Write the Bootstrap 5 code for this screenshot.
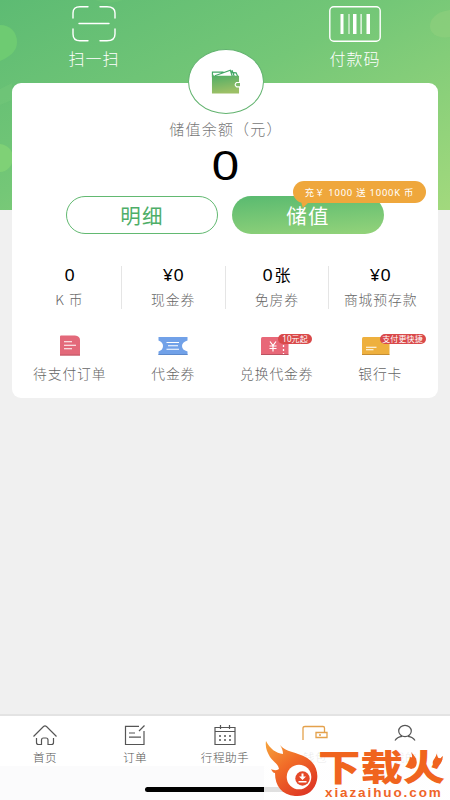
<!DOCTYPE html>
<html lang="zh-CN">
<head>
<meta charset="utf-8">
<meta name="viewport" content="width=device-width, initial-scale=1">
<title>钱包</title>
<link href="https://cdn.jsdelivr.net/npm/bootstrap@5.3.0/dist/css/bootstrap.min.css" rel="stylesheet">
<style>
html,body{height:100%}
body{font-family:"Liberation Sans","Noto Sans CJK SC",sans-serif;background:#f0f0f0;color:#666;font-weight:300;overflow:hidden}
.screen{width:450px;height:800px;overflow:hidden}
svg{display:block;overflow:visible}
.cjk{font-family:"Noto Sans CJK SC",sans-serif}
.hero{height:210px;background:linear-gradient(154deg,#5dbb73 0%,#74c777 45%,#a2d97d 100%)}
.blobs{left:0;top:0}
.quick{height:83px;padding:6px 35px 0 34px}
.quick-item{width:120px;font-size:16px;letter-spacing:1px;line-height:20px}
.quick-item svg{margin-bottom:6px}
.wallet-card{margin:-127px 12px 0;height:315px;border-radius:9px;padding:0 6px}
.purse{width:76px;height:65px;left:50%;top:-34px;margin-left:-37.5px;border:1px solid #62b36f;border-radius:50%;background:#fff}
.caption{padding-top:36px;font-size:15px;line-height:20px;letter-spacing:1.2px;color:#777}
.caption span{margin-left:2px}
.amount{font-family:"Noto Sans",sans-serif;font-weight:400;font-size:40px;line-height:44px;color:#000;height:57px;padding-top:4px}
.amount span{display:inline-block;transform:scale(1.24,1)}
.pill{width:152px;height:38px;border-radius:19px;font-size:20.5px;letter-spacing:1.2px;line-height:34px;padding:0;font-weight:400}
.pill-line{border:1px solid #62b971;color:#4eae68}
.pill-line:hover{border-color:#62b971;color:#4eae68}
.pill-fill,.pill-fill:hover{border:0;background:linear-gradient(176deg,#59ba70,#94d37a);color:#fff;line-height:36px}
.tip{left:61px;top:-15px;width:133px;height:22px;border-radius:11px;background:#efa73c;color:#fff;font-family:"Noto Sans","Noto Sans CJK SC",sans-serif;font-weight:400;font-size:9.4px;line-height:23px;letter-spacing:.8px;white-space:nowrap}
.tip-tail{left:8px;top:20px;width:9px;height:7px;background:#efa73c;clip-path:polygon(0 0,100% 0,20% 100%)}
.stats{margin-top:32px;height:41px}
.stat+.stat{border-left:1px solid #e5e5e5}
.num{font-family:"Noto Sans","Noto Sans CJK SC",sans-serif;font-weight:400;font-size:16px;line-height:19px;color:#000;letter-spacing:.3px}
.num b{font-weight:400;display:inline-block;transform:scaleX(1.12)}
.num i{font-style:normal;margin-left:2px}
.lab{font-size:13.8px;line-height:20px;letter-spacing:.9px;white-space:nowrap}
.stat .lab{margin-top:4px}
.tools{margin-top:28px}
.tool svg{margin:0 auto 7px}
.tag{top:-1px;height:10px;border-radius:5px;background:#d9494a;color:#fff;font-family:"Noto Sans","Noto Sans CJK SC",sans-serif;font-weight:400;font-size:8px;line-height:10px;letter-spacing:.1px;white-space:nowrap;text-align:center}
.tag-a{left:53px;width:34px}
.tag-b{left:51px;width:46px}
.tabs{height:86px;background:#fbfbfc;border-top:2px solid #e3e3e3}
.tabrow{height:50px;background:#fff}
.tab{width:90px;font-size:11.6px;letter-spacing:.5px;line-height:15px;padding-top:8px;color:#555}
.tab svg{margin:0 auto 4px}
.home-bar{width:160px;height:5px;border-radius:3px;background:#000;margin:21px 0 0 145px}
.brand{left:264px;top:738px;width:186px;height:62px;background:linear-gradient(transparent 4px,rgba(255,255,255,.88) 5px)}
.brand-flame{left:0;top:0}
.brand-name{left:54px;top:6px;font-size:40px;line-height:44px;font-weight:900;color:#f0641e;white-space:nowrap;transform:scale(1.06,.9);transform-origin:left 20px}
.brand-url{left:61px;top:49px;font-family:"Liberation Sans",sans-serif;font-weight:700;font-size:13.5px;line-height:12px;letter-spacing:1.9px;color:#ef6528}
</style>
<script src="https://cdn.jsdelivr.net/npm/bootstrap@5.3.0/dist/js/bootstrap.bundle.min.js"></script>
</head>
<body>
<main class="screen position-relative d-flex flex-column cjk">
  <header class="hero position-relative overflow-hidden flex-shrink-0">
    <svg class="blobs position-absolute" width="450" height="210">
      <path d="M0 25C10 25 17 32 17 42C17 52 9 57 0 61Z" fill="#6ecb72"/>
      <circle cx="-1" cy="158" r="14" fill="#7fd176"/>
      <path d="M450 10C436 12 430 19 430 26C430 34 438 39 450 37Z" fill="#8dcf7c" opacity=".7"/>
      <path d="M95 0Q108 6 123 0Z" fill="#6dc576" opacity=".6"/>
      <path d="M0 89L12 83V100L0 105Z" fill="#74c879" opacity=".5"/>
    </svg>
    <div class="quick position-relative d-flex justify-content-between text-white text-center">
      <div class="quick-item d-flex flex-column align-items-center">
        <svg width="44" height="36" fill="none" stroke="#fff" stroke-width="1.4" stroke-linecap="round"><path d="M1 12V7Q1 .7 8 .7H16M28 .7H35Q43 .7 43 7V12M1 23V28Q1 34.8 8 34.8H16M28 34.8H35Q43 34.8 43 28V23M7 17.5H37"/></svg>
        <span>扫一扫</span>
      </div>
      <div class="quick-item d-flex flex-column align-items-center">
        <svg width="52" height="36"><rect x=".8" y=".8" width="50.4" height="34.4" rx="4" fill="none" stroke="#fff" stroke-width="1.4"/><path d="M11.5 8h3v20h-3zM19.5 8h1v20h-1zM24 8h3.5v20H24zM31.5 8h1.2v20h-1.2zM37.5 8h3.5v20h-3.5z" fill="#fff"/></svg>
        <span>付款码</span>
      </div>
    </div>
  </header>

  <section class="wallet-card position-relative bg-white flex-shrink-0">
    <div class="purse position-absolute d-flex align-items-center justify-content-center">
      <svg width="29" height="26" viewBox="0 0 30 26">
        <defs><linearGradient id="leather" x1="0" y1="0" x2=".2" y2="1"><stop offset="0" stop-color="#43aa66"/><stop offset="1" stop-color="#9cc066"/></linearGradient></defs>
        <path d="M20 3L26 3.5L28 8M16 4L22 1.5L24 7" fill="none" stroke="#42a767" stroke-width="1.2"/>
        <path d="M1.5 8V2.800H13M4 6.500L20 .8L22 7" fill="#fff" stroke="#42a767" stroke-width="1.2"/>
        <path d="M1 3L3 6.500H29V25H1Z" fill="url(#leather)"/>
        <path d="M30 13.500H26.500Q23.500 15.700 26.500 18H30" fill="#7dba69" stroke="#fff" stroke-width="1.2"/>
      </svg>
    </div>
    <div class="caption text-center"><span>储值余额（元）</span></div>
    <div class="amount text-center"><span>0</span></div>
    <div class="d-flex justify-content-center" style="gap:14px">
      <button class="btn pill pill-line">明细</button>
      <div class="position-relative">
        <button class="btn pill pill-fill">储值</button>
        <div class="tip position-absolute text-center">充￥ 1000 送 1000K 币<div class="tip-tail position-absolute"></div></div>
      </div>
    </div>
    <div class="stats row g-0 text-center">
      <div class="col stat"><div class="num"><b>0</b></div><div class="lab">K 币</div></div>
      <div class="col stat"><div class="num"><b>¥0</b></div><div class="lab">现金券</div></div>
      <div class="col stat"><div class="num"><b>0</b><i>张</i></div><div class="lab">免房券</div></div>
      <div class="col stat"><div class="num"><b>¥0</b></div><div class="lab">商城预存款</div></div>
    </div>
    <div class="tools row g-0 text-center">
      <div class="col tool position-relative">
        <svg width="20" height="21"><path d="M0 1.5Q0 .5 1 .5H15Q20 1 20 5V20.500H0Z" fill="#e3697a"/><path d="M0 19.500h20v1H0z" fill="#be5867"/><path d="M4 6.800h8M4 10.300h12M4 13.800h8" stroke="#fff" stroke-width="1.1"/></svg>
        <div class="lab">待支付订单</div>
      </div>
      <div class="col tool position-relative">
        <svg width="30" height="21"><path d="M.5 2H29.500V5.500Q24 7 24 11T29.500 16.500V20H.5V16.500Q5 15 5 11T.5 5.500Z" fill="#71a1e8"/><path d="M.5 19h29v1H.5z" fill="#5c89cb"/><path d="M8.500 7.500h12.500M10 10.800h10M8.500 14.300h12.500" stroke="#fff" stroke-width="1.1"/></svg>
        <div class="lab">代金券</div>
      </div>
      <div class="col tool position-relative">
        <svg width="32" height="21"><rect x="0" y="2" width="27.5" height="18" rx="1.5" fill="#e86878"/><path d="M0 19h27.500v1H0z" fill="#bb5361"/><path d="M9 6.500l3 4 3-4M12 10.500v6M8.500 11h7M8.500 13.500h7" fill="none" stroke="#fff" stroke-width="1.2"/><path d="M22.500 10v9" stroke="#fff" stroke-width="1.3" stroke-dasharray="2 2"/></svg>
        <div class="tag tag-a position-absolute">10元起</div>
        <div class="lab">兑换代金券</div>
      </div>
      <div class="col tool position-relative">
        <svg width="36" height="21"><rect x="0" y="2" width="27.5" height="18" rx="1.5" fill="#eeb03e"/><path d="M0 19h27.500v1H0z" fill="#c58d32"/><path d="M4 12.300h10.500M4 14.800h7.500" stroke="#fff" stroke-width="1.1"/></svg>
        <div class="tag tag-b position-absolute">支付更快捷</div>
        <div class="lab">银行卡</div>
      </div>
    </div>
  </section>

  <footer class="tabs mt-auto flex-shrink-0">
    <nav class="tabrow d-flex text-center">
      <div class="tab"><svg width="24" height="22" fill="none" stroke="#555" stroke-width="1.2"><path d="M.5 12.500L10.500 2.500Q12 1.300 13.500 2.500L23.500 12.500M3.500 14V18.500Q3.500 20.500 5.500 20.500H8.500V16Q8.500 14 10.500 14H13Q15 14 15 16V20.500H18.500Q20.500 20.500 20.500 18.500V14"/></svg>首页</div>
      <div class="tab"><svg width="22" height="22" fill="none" stroke="#555" stroke-width="1.2"><path d="M15 2.300H1.500V20.500H20V7M20.500 1.500L15 7M5 9h6M5 13.200h12"/></svg>订单</div>
      <div class="tab"><svg width="22" height="22" fill="none" stroke="#555" stroke-width="1.2"><path d="M1 3.500H21V20.500H1ZM1 7.500H21M6.500 1V5M15.500 1V5"/><path d="M5 12h12M5 16h12" stroke-width="1.7" stroke-dasharray="2 3"/></svg>行程助手</div>
      <div class="tab"><svg width="26" height="22" fill="none" stroke="#e4a14b" stroke-width="1.3"><path d="M1 16V4Q1 2.500 3 2.500H21Q22.500 2.500 22.500 4V8M14 8.500H25V13.500H14ZM17 11h2"/></svg>钱包</div>
      <div class="tab"><svg width="22" height="22" fill="none" stroke="#555" stroke-width="1.2"><ellipse cx="11" cy="7" rx="6.3" ry="5.7"/><path d="M1 16.500Q3 13 8 12.300M14 12.300Q19 13 21 16.500"/></svg>我的</div>
    </nav>
    <div class="home-bar"></div>
  </footer>

  <aside class="brand position-absolute">
    <svg class="brand-flame position-absolute" width="186" height="62">
      <defs><linearGradient id="fire" x1="0" y1="0" x2=".7" y2="1"><stop stop-color="#f6a43c"/><stop offset=".48" stop-color="#f16b27"/><stop offset="1" stop-color="#df3924"/></linearGradient></defs>
      <path d="M2 3C6 11 12 15 19 16C19 13 18 10 16 7C21 13 27 13 34 16C48 20 55 30 53 42C51 53 42 59 31 58C18 57 11 48 11 35C9 35 8 33 7 31C9 32 12 33 15 31C14 25 9 24 6 19C3 14 1 9 2 3Z" fill="url(#fire)"/>
      <circle cx="35" cy="39" r="12.3" fill="#fff"/><circle cx="38.500" cy="40.500" r="7.2" fill="#e54828"/>
      <path d="M37.500 35.500h2v3h2.500L38.500 42 35 38.500h2.500ZM34.500 43h8v1.500h-8z" fill="#fff"/>
      <path d="M147 14C152 19 154 23 152 28C149 33 144 30 144 26C146 27 147 25 146 22C148 22 149 18 147 14ZM174 13C171 18 176 19 173 22C176 22 177 19 179 18C178 25 176 28 171 28C167 26 169 22 171 20Z" fill="#f0641e"/>
    </svg>
    <div class="brand-name position-absolute">下载火</div>
    <div class="brand-url position-absolute">xiazaihuo.com</div>
  </aside>
</main>
</body>
</html>
